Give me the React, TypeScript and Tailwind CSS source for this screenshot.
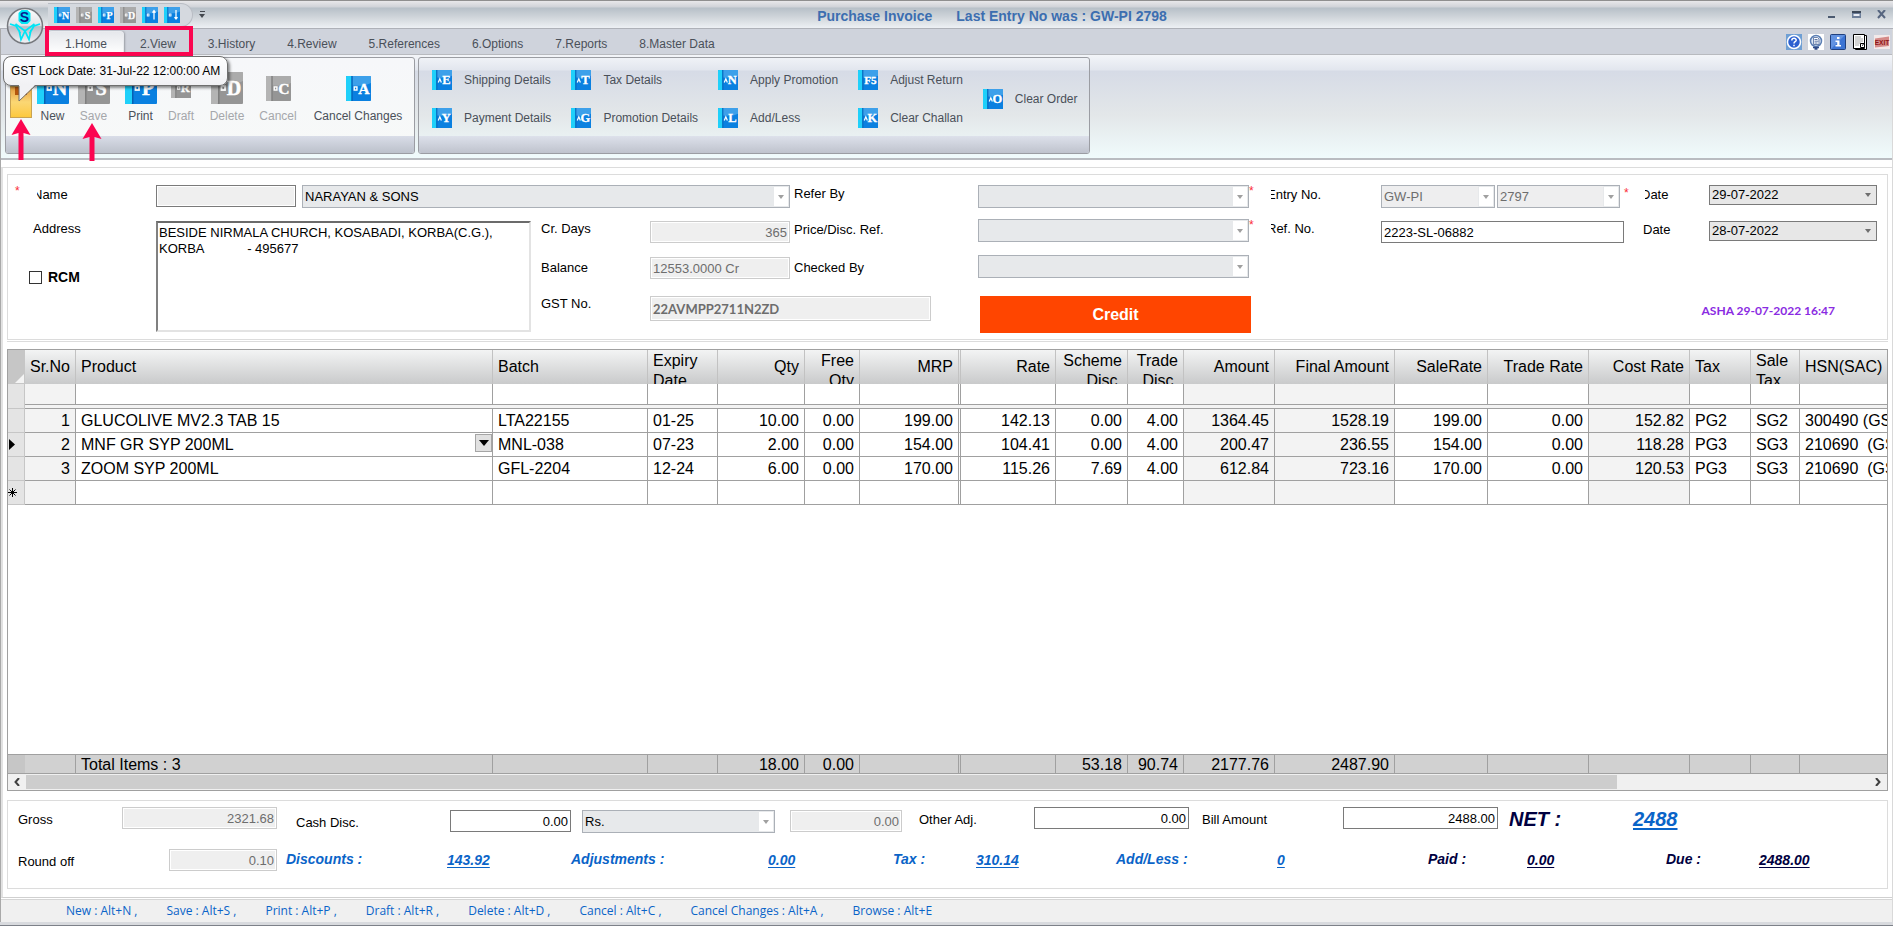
import type { ReactNode } from "react";
import clsx from "clsx";

interface KeyIconProps {
  glyph: string;
  mark?: "square" | "caret" | "none";
  size?: "sm" | "md" | "lg" | "xl";
  muted?: boolean;
}

// Book-shaped shortcut icon, the letter is the key that triggers the command
function KeyIcon({ glyph, mark = "square", size = "md", muted = false }: KeyIconProps) {
  return (
    <svg
      viewBox="0 0 32 32"
      aria-hidden="true"
      className={clsx(
        "shrink-0",
        size === "sm" && "size-4",
        size === "md" && "size-5",
        size === "lg" && "size-[25px]",
        size === "xl" && "size-8"
      )}
    >
      <rect width="32" height="32" rx="1" fill={muted ? "#959595" : "#0a80e0"} />
      <path d="M8 0h24v9c-8 4-16 4-24 3z" fill={muted ? "#b0b0b0" : "#4aa8ec"} opacity="0.8" />
      <rect width="7" height="32" rx="1" fill={muted ? "#b4b4b4" : "#1fd0fa"} />
      <rect x="7" width="1.5" height="32" fill={muted ? "#7e7e7e" : "#0560b4"} />
      {mark === "square" && <rect x="10.500" y="14" width="3.500" height="4" fill="none" stroke="#fff" strokeWidth="1.800" />}
      {mark === "caret" && <path d="M10 20l2.500-6 2.500 6" fill="none" stroke="#fff" strokeWidth="2" />}
      {glyph === "up" && <path d="M24 25V8M21 11l3-4 3 4" fill="none" stroke="#fff" strokeWidth="2.5" />}
      {glyph === "down" && <path d="M24 6v17M21 20l3 4 3-4" fill="none" stroke="#fff" strokeWidth="2.5" />}
      {glyph !== "up" && glyph !== "down" && (
        <text
          x={mark === "none" ? 20 : 23}
          y="23"
          textAnchor="middle"
          fill="#fff"
          stroke="#fff"
          strokeWidth="0.5"
          fontFamily="Liberation Serif, serif"
          fontWeight="bold"
          fontSize={mark === "none" ? 18 : 20}
        >
          {glyph}
        </text>
      )}
    </svg>
  );
}

function DownArrow({ className }: { className?: string }) {
  return (
    <svg viewBox="0 0 6 4" className={clsx("w-1.5 h-1", className)} aria-hidden="true">
      <path d="M0 0h6L3 4z" fill="currentColor" />
    </svg>
  );
}

interface ComboProps {
  id: string;
  value?: string;
  label?: string;
  variant?: "combo" | "dim" | "date";
  className?: string;
}

function Combo({ id, value = "", label, variant = "combo", className }: ComboProps) {
  return (
    <div
      className={clsx(
        "flex items-stretch border",
        variant === "combo" && "h-[23px] bg-[#e7e9eb] border-[#abb0b7] text-black",
        variant === "dim" && "h-[23px] bg-[#eeeeef] border-[#abb0b7] text-[#6d6d6d]",
        variant === "date" && "h-5 bg-[#e7e7e7] border-[#7a7a7a] text-black",
        className
      )}
    >
      <select id={id} aria-label={label} defaultValue={value} className="appearance-none flex-1 min-w-0 pl-0.5 bg-transparent outline-none">
        <option value={value}>{value}</option>
      </select>
      <span
        className={clsx(
          "w-4 flex items-center justify-center",
          variant === "date" ? "text-[#6f6f6f]" : "bg-white border border-[#e7e9eb] text-[#a0a0a0]"
        )}
      >
        <DownArrow />
      </span>
    </div>
  );
}

interface FieldProps {
  id: string;
  value?: string;
  label?: string;
  tone?: "edit" | "locked" | "framed";
  className?: string;
}

function Field({ id, value = "", label, tone = "edit", className }: FieldProps) {
  return (
    <input
      id={id}
      type="text"
      aria-label={label}
      defaultValue={value}
      readOnly={tone !== "edit"}
      className={clsx(
        "border px-0.5 outline-none",
        tone === "edit" && "bg-white border-[#7a7a7a] text-black",
        tone === "locked" && "bg-[#efefef] border-[#cccccc] text-[#6d6d6d] ring-1 ring-inset ring-white",
        tone === "framed" && "bg-[#efefef] border-[#7a7a7a] text-[#6d6d6d] ring-1 ring-inset ring-white",
        className
      )}
    />
  );
}

function Star() {
  return <span className="w-2 shrink-0 text-red-500 text-xs leading-3">*</span>;
}

// Label whose first letter runs under the required marker
function CutLabel({ htmlFor, children }: { htmlFor: string; children: ReactNode }) {
  return (
    <label htmlFor={htmlFor} className="block overflow-hidden">
      <span className="block -ml-1">{children}</span>
    </label>
  );
}

const quickAccess = [
  { glyph: "N", name: "New" },
  { glyph: "S", name: "Save", muted: true },
  { glyph: "P", name: "Print" },
  { glyph: "D", name: "Delete", muted: true },
  { glyph: "up", name: "Previous" },
  { glyph: "down", name: "Next" },
];

const tabs = ["1.Home", "2.View", "3.History", "4.Review", "5.References", "6.Options", "7.Reports", "8.Master Data"];

const commands: { glyph: string; name: string; size: "md" | "lg" | "xl"; muted?: boolean; width: string }[] = [
  { glyph: "N", name: "New", size: "xl", width: "w-[41px]" },
  { glyph: "S", name: "Save", size: "xl", muted: true, width: "w-[41px]" },
  { glyph: "P", name: "Print", size: "xl", width: "w-[53px]" },
  { glyph: "R", name: "Draft", size: "md", muted: true, width: "w-7" },
  { glyph: "D", name: "Delete", size: "xl", muted: true, width: "w-16" },
  { glyph: "C", name: "Cancel", size: "lg", muted: true, width: "w-[38px]" },
  { glyph: "A", name: "Cancel Changes", size: "lg", width: "w-[98px] ml-3" },
];

const shortcuts: { glyph: string; name: string; mark?: "none" }[][] = [
  [{ glyph: "E", name: "Shipping Details" }, { glyph: "Y", name: "Payment Details" }],
  [{ glyph: "T", name: "Tax Details" }, { glyph: "G", name: "Promotion Details" }],
  [{ glyph: "N", name: "Apply Promotion" }, { glyph: "L", name: "Add/Less" }],
  [{ glyph: "F5", name: "Adjust Return", mark: "none" }, { glyph: "K", name: "Clear Challan" }],
  [{ glyph: "O", name: "Clear Order" }],
];

interface Column {
  name: string;
  width: string;
  right?: boolean;
  twoLine?: boolean;
  shaded?: boolean;
  split?: boolean;
}

const columns: Column[] = [
  { name: "Sr.No", width: "w-[51px]", right: true, shaded: true },
  { name: "Product", width: "w-[417px]" },
  { name: "Batch", width: "w-[155px]" },
  { name: "Expiry Date", width: "w-[70px]", twoLine: true },
  { name: "Qty", width: "w-[87px]", right: true },
  { name: "Free Qty", width: "w-[55px]", right: true, twoLine: true },
  { name: "MRP", width: "w-[101px]", right: true, split: true },
  { name: "Rate", width: "w-[95px]", right: true },
  { name: "Scheme Disc.", width: "w-[72px]", right: true, twoLine: true },
  { name: "Trade Disc.", width: "w-[56px]", right: true, twoLine: true },
  { name: "Amount", width: "w-[91px]", right: true, shaded: true },
  { name: "Final Amount", width: "w-[120px]", right: true, shaded: true },
  { name: "SaleRate", width: "w-[93px]", right: true },
  { name: "Trade Rate", width: "w-[101px]", right: true },
  { name: "Cost Rate", width: "w-[101px]", right: true, shaded: true },
  { name: "Tax", width: "w-[61px]" },
  { name: "Sale Tax", width: "w-[49px]", twoLine: true },
  { name: "HSN(SAC)", width: "" },
];

const rows = [
  ["1", "GLUCOLIVE MV2.3 TAB 15", "LTA22155", "01-25", "10.00", "0.00", "199.00", "142.13", "0.00", "4.00", "1364.45", "1528.19", "199.00", "0.00", "152.82", "PG2", "SG2", "300490 (GS"],
  ["2", "MNF GR SYP 200ML", "MNL-038", "07-23", "2.00", "0.00", "154.00", "104.41", "0.00", "4.00", "200.47", "236.55", "154.00", "0.00", "118.28", "PG3", "SG3", "210690  (GS"],
  ["3", "ZOOM SYP 200ML", "GFL-2204", "12-24", "6.00", "0.00", "170.00", "115.26", "7.69", "4.00", "612.84", "723.16", "170.00", "0.00", "120.53", "PG3", "SG3", "210690  (GS"],
];

const totals = ["", "Total Items : 3", "", "", "18.00", "0.00", "", "", "53.18", "90.74", "2177.76", "2487.90", "", "", "", "", "", ""];

const hints = [
  "New : Alt+N ,",
  "Save : Alt+S ,",
  "Print : Alt+P ,",
  "Draft : Alt+R ,",
  "Delete : Alt+D ,",
  "Cancel : Alt+C ,",
  "Cancel Changes : Alt+A ,",
  "Browse : Alt+E",
];

function GridColumns() {
  return (
    <colgroup>
      <col className="w-[17px]" />
      {columns.map((c) => (
        <col key={c.name} className={c.width} />
      ))}
    </colgroup>
  );
}

function AppButton() {
  return (
    <button type="button" aria-label="Application menu" className="absolute left-1.5 top-[7px] size-[38px] z-10">
      <svg viewBox="0 0 38 38" className="size-full">
        <defs>
          <linearGradient id="orb" x1="0" y1="0" x2="0" y2="1">
            <stop offset="0" stopColor="#fdfdfd" />
            <stop offset="0.48" stopColor="#e2e4e8" />
            <stop offset="0.52" stopColor="#b9bdc6" />
            <stop offset="1" stopColor="#f4f5f8" />
          </linearGradient>
        </defs>
        <circle cx="19" cy="19" r="17.5" fill="url(#orb)" stroke="#77797e" strokeWidth="1.5" />
        <path
          d="M4 17l6 2 4.500 7.500M34 17l-6 2-4.500 7.500M9.500 17l9.500 7 9.500-7M13 23l2 9.500 4-8.500 4 8.500 2-9.500"
          fill="none"
          stroke="#00e5f5"
          strokeWidth="1.7"
        />
        <path d="M15.500 3h6l3 3v8l-3 3h-6l-3-3V6z" fill="#00e5f5" />
        <text x="18.500" y="15" textAnchor="middle" fontSize="14" fontWeight="bold" fill="#0a1a90" fontFamily="Liberation Sans, sans-serif">
          S
        </text>
      </svg>
    </button>
  );
}

function TitleBar() {
  return (
    <div className="h-[29px] flex items-center border-t border-t-[#8f8f8f] border-b border-b-[#aeb1b8] bg-[linear-gradient(#e8e8ea_0,#d0d3d8_6px,#b7c0c8_7px,#d2d7dc_17px,#edf0f4_100%)]">
      <div className="h-6 ml-12 pl-[6px] pr-3 flex items-center gap-1.5 rounded-r-full border border-l-0 border-[#b9bdc4] bg-[#d5d9df]">
        {quickAccess.map((q) => (
          <button key={q.name} type="button" aria-label={q.name}>
            <KeyIcon glyph={q.glyph} muted={q.muted} size="sm" />
          </button>
        ))}
      </div>
      <button type="button" aria-label="Customize" className="ml-1.5 flex flex-col items-center gap-0.5 text-[#44484f]">
        <span className="w-[5px] h-px bg-[#44484f]" />
        <DownArrow />
      </button>
      <h1 className="flex-1 flex justify-center gap-6 pt-0.5 pr-12 text-sm font-bold text-[#3c6eb0]">
        <span>Purchase Invoice</span>
        <span>Last Entry No was : GW-PI 2798</span>
      </h1>
      <div className="flex items-center gap-4 pr-[7px]">
        <button type="button" aria-label="Minimize">
          <svg viewBox="0 0 9 9" className="size-[9px]"><path d="M1 6h7v2H1z" fill="#4b5a70" /></svg>
        </button>
        <button type="button" aria-label="Restore">
          <svg viewBox="0 0 9 9" className="size-[9px]">
            <path d="M0 1h9v7H0z" fill="#6d7f9a" />
            <path d="M0 1h9v2H0z" fill="#3c4859" />
            <path d="M1.500 4h6v2h-6z" fill="#e8ecf4" />
          </svg>
        </button>
        <button type="button" aria-label="Close">
          <svg viewBox="0 0 9 9" className="size-[9px]"><path d="M1 0l7 8M8 0L1 8" stroke="#56657f" strokeWidth="2" /></svg>
        </button>
      </div>
    </div>
  );
}

function TabStrip() {
  return (
    <div className="h-[26px] flex items-end bg-[#cfd3dc] border-b border-[#b8babf] text-xs text-[#4a5059]">
      <nav className="flex ml-[47px]">
        {tabs.map((tab, index) => (
          <button
            key={tab}
            type="button"
            className={clsx(
              "h-[23px] px-4 pt-0.5",
              index === 0 && "rounded-t-sm border-x border-t border-[#e9ebef] bg-linear-to-b from-[#e6e8ec] to-white shadow-[1px_0_2px_rgba(0,0,0,0.25)]"
            )}
          >
            {tab}
          </button>
        ))}
      </nav>
      <div className="ml-auto self-center flex gap-1.5 pt-px pr-0.5">
        <button type="button" aria-label="Help">
          <svg viewBox="0 0 16 16" className="size-4">
            <rect width="16" height="16" fill="#6f9fd4" />
            <circle cx="8" cy="8" r="6.500" fill="#2a5fd0" stroke="#fff" strokeWidth="1.500" />
            <path d="M5.800 6.500C5.800 3.500 10.400 3.700 10.200 6.300 10.100 7.800 8 7.700 8 9.500M8 10.800v1.500" fill="none" stroke="#fff" strokeWidth="1.500" />
          </svg>
        </button>
        <button type="button" aria-label="Notes">
          <svg viewBox="0 0 16 16" className="size-4">
            <rect width="16" height="16" fill="#fff" />
            <circle cx="8" cy="7" r="5.500" fill="#dfe8f5" stroke="#5c7fb4" strokeWidth="1.500" />
            <path d="M5.500 3.500h4l1.500 1.500v5.500H5.500z" fill="#fff" stroke="#4b679c" strokeWidth="0.800" />
            <path d="M6.500 5.500h3M6.500 7.200h4M6.500 9h3" stroke="#4b679c" strokeWidth="0.900" />
            <path d="M5 13.500h6M6.500 15h3" stroke="#2f4a86" strokeWidth="1.300" />
          </svg>
        </button>
        <button type="button" aria-label="Information">
          <svg viewBox="0 0 16 16" className="size-4">
            <rect x="0.500" y="0.500" width="15" height="15" rx="1" fill="#3c74d4" stroke="#20407e" />
            <path d="M1 1h14L1 15z" fill="#7ba6ea" opacity="0.600" />
            <path d="M7 3h2.500v2H7zM5.500 6.500h4V11H11v1.500H5.500V11h1.700V8H5.500z" fill="#fff" />
          </svg>
        </button>
        <button type="button" aria-label="Document">
          <svg viewBox="0 0 16 16" className="size-4">
            <path d="M3.500 1.500h11v14h-11z" fill="#fff" stroke="#000" />
            <path d="M1.500 0.500h11v14h-11z" fill="#fff" stroke="#000" />
            <path d="M3 3h6M3 5h8M3 7h8M3 9h6M3 11h4" stroke="#a9a9a9" />
            <path d="M8.500 9.500h4v4h-4zM10 11.500l1.500-1" fill="#fff" stroke="#000" />
          </svg>
        </button>
        <button type="button" aria-label="Exit">
          <svg viewBox="0 0 16 16" className="size-4">
            <rect y="1" width="16" height="14" fill="#f3e9e9" />
            <path d="M1 4.500l14-2V12L1 13.500z" fill="#d58a88" />
            <text x="8" y="11" textAnchor="middle" fontSize="6.500" fontWeight="bold" fill="#8e1414" fontFamily="Liberation Sans, sans-serif">
              EXIT
            </text>
          </svg>
        </button>
      </div>
    </div>
  );
}

function Ribbon() {
  return (
    <div className="h-[105px] pl-1 pt-0.5 pb-1 flex items-stretch gap-[3px] text-xs text-[#4a5059] border-b-2 border-b-[#b9bcc1] bg-[linear-gradient(#f3f5f9_0,#e2e6ee_15px,#d6dbe6_16px,#e3e7e9_60px,#f0fbfc_100%)]">
      {/* Commands */}
      <section className="w-[410px] flex flex-col border border-[#9b9da3] rounded-[3px] overflow-hidden bg-linear-to-b from-[#f6f7fa] to-[#f7f9f8]">
        <div className="flex-1 flex items-end pb-3">
          <button
            type="button"
            aria-label="GST lock"
            className="w-[22px] h-8 ml-1 mb-1.5 border border-[#c9a353] bg-linear-to-b from-[#e39a3c] via-[#fbd774] to-[#fdc93c] flex justify-center"
          >
            <span className="w-3 h-2 bg-[#b4560c]" />
          </button>
          {commands.map((c) => (
            <button key={c.name} type="button" className={clsx("flex flex-col items-center whitespace-nowrap", c.width, c.muted && "text-[#a5a7ab]")}>
              <span className="h-8 mb-1 flex items-center justify-center">
                <KeyIcon glyph={c.glyph} size={c.size} muted={c.muted} />
              </span>
              <span className="h-4">{c.name}</span>
            </button>
          ))}
        </div>
        <div className="h-[17px] bg-linear-to-b from-[#d9dde8] to-[#bcc1cb]" />
      </section>
      {/* Shortcuts */}
      <section className="flex flex-col border border-[#9b9da3] rounded-[3px] overflow-hidden">
        <div className="flex-1 flex items-center gap-5 pt-[3px] pl-[13px] pr-[11px]">
          {shortcuts.map((group) => (
            <div key={group[0].name} className="flex flex-col gap-[17px]">
              {group.map((s) => (
                <button key={s.name} type="button" className="flex items-center gap-3 whitespace-nowrap">
                  <KeyIcon glyph={s.glyph} mark={s.mark ?? "caret"} />
                  <span className="leading-5 pt-px">{s.name}</span>
                </button>
              ))}
            </div>
          ))}
        </div>
        <div className="h-[17px] bg-linear-to-b from-[#dde1eb] to-[#bfc3cd]" />
      </section>
    </div>
  );
}

// Balloon, frame and arrows that sit over the ribbon
function Callouts() {
  return (
    <>
      <div className="absolute left-[45px] top-[26px] w-[148px] h-[30px] border-4 border-[#fb0550] z-20" />
      <div role="tooltip" className="absolute left-[3px] top-14 h-[30px] px-[7px] flex items-center whitespace-nowrap text-xs text-black bg-linear-to-b from-white to-[#f1f1f4] border border-[#6f6f6f] rounded-lg shadow-[2px_2px_3px_rgba(0,0,0,0.45)] z-20">
        GST Lock Date: 31-Jul-22 12:00:00 AM
      </div>
      <svg viewBox="0 0 18 17" className="absolute left-[18px] top-[85px] w-[18px] h-[17px] z-30" aria-hidden="true">
        <path d="M1 0v16L17 0z" fill="#f1f1f4" />
        <path d="M1 1v15L17 1" fill="none" stroke="#6f6f6f" />
      </svg>
      <svg viewBox="0 0 20 42" className="absolute left-[11px] top-[119px] w-5 h-[42px] z-20" aria-hidden="true">
        <path d="M10 0l9.500 16L12.500 14v27h-5V14L.5 16z" fill="#fb0550" />
      </svg>
      <svg viewBox="0 0 20 42" className="absolute left-[82px] top-[123px] w-5 h-[38px] z-20" aria-hidden="true" preserveAspectRatio="xMidYMin slice">
        <path d="M10 0l9.500 16L12.500 14v24h-5V14L.5 16z" fill="#fb0550" />
      </svg>
    </>
  );
}

function InvoiceForm() {
  return (
    <section className="mx-1 mt-1.5 h-[166px] shrink-0 pt-[10px] pr-[10px] flex border border-[#dcdcdc] text-[13px] leading-4">
      {/* Party */}
      <div className="flex-1 min-w-0">
        <div className="flex h-9">
          <div className="w-[148px] shrink-0 flex pl-[7px]">
            <Star />
            <div className="pl-[14px] pt-0.5">
              <CutLabel htmlFor="party-code">Name</CutLabel>
            </div>
          </div>
          <Field id="party-code" tone="framed" className="w-[140px] h-[22px]" />
          <Combo id="party-name" label="Party name" value="NARAYAN & SONS" className="flex-1 ml-1.5" />
        </div>
        <div className="flex">
          <div className="w-[148px] shrink-0 pl-[21px]">
            <label htmlFor="address" className="block pl-1">Address</label>
            <div className="flex items-center gap-1.5 mt-[30px]">
              <input id="rcm" type="checkbox" className="appearance-none size-[13px] border border-[#333333] bg-white" />
              <label htmlFor="rcm" className="text-sm font-bold">RCM</label>
            </div>
          </div>
          <textarea
            id="address"
            defaultValue={"BESIDE NIRMALA CHURCH, KOSABADI, KORBA(C.G.),\nKORBA            - 495677"}
            className="flex-1 min-w-0 h-[111px] pl-px pt-0.5 resize-none outline-none border-2 border-l-[#808080] border-t-[#6b6b6b] border-r-[#e3e3e3] border-b-[#e3e3e3]"
          />
          <div className="w-[259px] shrink-0 pl-[10px]">
            <div className="flex h-9">
              <label htmlFor="cr-days" className="w-[109px]">Cr. Days</label>
              <Field id="cr-days" value="365" tone="locked" className="w-[140px] h-[22px] text-right" />
            </div>
            <div className="flex h-[39px]">
              <label htmlFor="balance" className="w-[109px] pt-[3px]">Balance</label>
              <Field id="balance" value="12553.0000 Cr" tone="locked" className="w-[140px] h-[22px]" />
            </div>
            <div className="flex">
              <label htmlFor="gst-no" className="w-[109px] shrink-0">GST No.</label>
              <Field id="gst-no" value="22AVMPP2711N2ZD" tone="locked" className="w-[281px] shrink-0 h-[25px] font-[Lato,sans-serif] font-bold" />
            </div>
          </div>
        </div>
      </div>

      {/* References */}
      <div className="w-[481px] shrink-0 pl-1">
        <div className="flex h-[34px]">
          <label htmlFor="refer-by" className="w-[184px] pt-px">Refer By</label>
          <Combo id="refer-by" className="w-[271px]" />
          <Star />
        </div>
        <div className="flex h-9">
          <label htmlFor="price-ref" className="w-[184px] pt-[3px]">Price/Disc. Ref.</label>
          <Combo id="price-ref" className="w-[271px]" />
          <Star />
        </div>
        <div className="flex h-[41px]">
          <label htmlFor="checked-by" className="w-[184px] pt-[5px]">Checked By</label>
          <Combo id="checked-by" className="w-[271px]" />
        </div>
        <button type="button" className="ml-[186px] w-[271px] h-[37px] bg-[#ff4500] text-white text-base font-bold">
          Credit
        </button>
      </div>

      {/* Voucher */}
      <div className="w-[606px] shrink-0 flex flex-col">
        <div className="flex h-9">
          <div className="w-[110px] pt-0.5">
            <CutLabel htmlFor="entry-series">Entry No.</CutLabel>
          </div>
          <Combo id="entry-series" value="GW-PI" variant="dim" className="w-[114px]" />
          <Combo id="entry-no" label="Entry number" value="2797" variant="dim" className="w-[123px] ml-0.5" />
          <span className="pl-1"><Star /></span>
          <div className="ml-auto w-16 pt-0.5">
            <CutLabel htmlFor="entry-date">Date</CutLabel>
          </div>
          <Combo id="entry-date" value="29-07-2022" variant="date" className="w-[168px]" />
        </div>
        <div className="flex h-9">
          <div className="w-[110px]">
            <CutLabel htmlFor="ref-no">Ref. No.</CutLabel>
          </div>
          <Field id="ref-no" value="2223-SL-06882" className="w-[243px] h-[22px]" />
          <label htmlFor="ref-date" className="ml-auto w-[66px] pt-px">Date</label>
          <Combo id="ref-date" value="28-07-2022" variant="date" className="w-[168px]" />
        </div>
        <p className="mt-auto mb-5 pr-[42px] text-right text-xs font-[Lato,sans-serif] font-bold text-[#8a2be2]">ASHA 29-07-2022 16:47</p>
      </div>
    </section>
  );
}

function ItemGrid() {
  return (
    <section className="mx-1 mt-px flex-1 flex flex-col border-t border-[#dcdcdc] pt-[7px]">
      <div className="flex-1 flex flex-col border border-[#a0a0a0] text-base leading-5 overflow-hidden">
        <table className="w-full table-fixed border-separate border-spacing-0">
          <GridColumns />
          <thead>
            <tr>
              <th aria-label="Select all" className="p-0 h-[34px] bg-[#c6c6c6] border-r border-b border-[#c6c6c6] align-bottom">
                <svg viewBox="0 0 9 9" className="size-[9px] ml-auto"><path d="M9 0v9H0z" fill="#f4f4f4" /></svg>
              </th>
              {columns.map((c) => (
                <th
                  key={c.name}
                  className={clsx(
                    "p-0 h-[34px] font-normal bg-linear-to-b from-[#f3f4f4] to-[#c9cacb] border-r border-[#c2c2c2] last:border-r-0",
                    c.right ? "text-right" : "text-left",
                    c.split && "border-r-[3px] [border-right-style:double]"
                  )}
                >
                  <div
                    className={clsx(
                      "h-[34px] pr-[5px] overflow-hidden",
                      c.name !== "Sr.No" && "pl-[5px]",
                      c.twoLine ? "pt-px leading-5" : "leading-[34px] whitespace-nowrap"
                    )}
                  >
                    {c.twoLine ? (
                      <>
                        {c.name.split(" ")[0]}
                        <br />
                        {c.name.split(" ")[1]}
                      </>
                    ) : (
                      c.name
                    )}
                  </div>
                </th>
              ))}
            </tr>
          </thead>
          <tbody>
            {/* Filter row */}
            <tr>
              <td className="h-[21px] bg-[#e4e4e4] border-r border-[#c6c6c6]" />
              {columns.map((c) => (
                <td
                  key={c.name}
                  className={clsx("h-[21px] border-r border-b border-[#a0a0a0] last:border-r-0", c.shaded && "bg-[#f3f3f3]", c.split && "border-r-[3px] [border-right-style:double]")}
                />
              ))}
            </tr>
            <tr>
              <td className="h-1 p-0 bg-[#e4e4e4] border-r border-b border-[#c6c6c6]" />
              <td colSpan={columns.length} className="h-1 p-0 bg-[#f3f3f3] border-b border-[#a0a0a0]" />
            </tr>
            {rows.map((row, rowIndex) => (
              <tr key={row[0]}>
                <td className="h-6 p-0 bg-[#e4e4e4] border-r border-b border-[#c6c6c6]">
                  {rowIndex === 1 && (
                    <svg viewBox="0 0 6 11" className="w-1.5 h-[11px] ml-px"><path d="M0 0l6 5.500L0 11z" fill="#000" /></svg>
                  )}
                </td>
                {row.map((cell, index) => (
                  <td
                    key={columns[index].name}
                    className={clsx(
                      "h-6 p-0 border-r border-b border-[#a0a0a0] last:border-r-0 whitespace-pre overflow-hidden",
                      columns[index].shaded && "bg-[#f3f3f3]",
                      columns[index].right ? "text-right pr-[5px]" : "pl-[5px]",
                      columns[index].split && "border-r-[3px] [border-right-style:double]"
                    )}
                  >
                    {rowIndex === 1 && index === 1 ? (
                      <div className="flex items-start justify-between">
                        <span className="pt-px">{cell}</span>
                        <button type="button" aria-label="Choose product" className="w-[17px] h-[18px] flex items-center justify-center bg-[#e1e1e1] border border-[#a5a5a5]">
                          <svg viewBox="0 0 10 6" className="w-2.5 h-1.5"><path d="M0 0h10L5 6z" fill="#000" /></svg>
                        </button>
                      </div>
                    ) : (
                      cell
                    )}
                  </td>
                ))}
              </tr>
            ))}
            {/* New row */}
            <tr>
              <td className="h-6 p-0 bg-[#e4e4e4] border-r border-b border-[#c6c6c6]">
                <svg viewBox="0 0 9 9" className="size-[9px]">
                  <path d="M4.500 0v9M0 4.500h9M1.500 1.500l6 6M7.500 1.500l-6 6" stroke="#000" />
                </svg>
              </td>
              {columns.map((c) => (
                <td
                  key={c.name}
                  className={clsx("h-6 border-r border-b border-[#a0a0a0] last:border-r-0", c.shaded && "bg-[#f3f3f3]", c.split && "border-r-[3px] [border-right-style:double]")}
                />
              ))}
            </tr>
          </tbody>
        </table>

        <table className="w-full mt-auto table-fixed border-separate border-spacing-0 bg-[#d1d1d1] border-y border-[#a0a0a0]">
          <GridColumns />
          <tbody>
            <tr>
              <td className="bg-[#c6c6c6]" />
              {totals.map((cell, index) => (
                <td
                  key={columns[index].name}
                  className={clsx(
                    "h-[18px] leading-[17px] p-0 pt-px border-r border-[#a0a0a0] last:border-r-0",
                    columns[index].right ? "text-right pr-[5px]" : "pl-[5px]",
                    columns[index].split && "border-r-[3px] [border-right-style:double]"
                  )}
                >
                  {cell}
                </td>
              ))}
            </tr>
          </tbody>
        </table>
        <div className="h-4 shrink-0 flex bg-[#f0f0f0]">
          <button type="button" aria-label="Scroll left" className="w-[18px] flex items-center justify-center">
            <svg viewBox="0 0 6 8" className="w-1.5 h-2"><path d="M5 0L1.500 4 5 8" fill="none" stroke="#404040" strokeWidth="2" /></svg>
          </button>
          <div className="flex-1 my-px">
            <div className="w-[86.3%] h-full bg-[#cdcdcd]" />
          </div>
          <button type="button" aria-label="Scroll right" className="w-[18px] flex items-center justify-center">
            <svg viewBox="0 0 6 8" className="w-1.5 h-2"><path d="M1 0l3.500 4L1 8" fill="none" stroke="#404040" strokeWidth="2" /></svg>
          </button>
        </div>
      </div>
    </section>
  );
}

interface SummaryProps {
  name: string;
  value: string;
  dark?: boolean;
  className?: string;
  nameWidth: string;
}

function Summary({ name, value, dark, className, nameWidth }: SummaryProps) {
  return (
    <div className={clsx("flex text-sm leading-5 font-bold italic", dark ? "text-[#000040]" : "text-[#0a64c8]", className)}>
      <span className={nameWidth}>{name}</span>
      <a href="#" className="pt-px underline underline-offset-2">{value}</a>
    </div>
  );
}

function Footer() {
  return (
    <section className="mx-1 mt-[9px] h-[89px] shrink-0 pt-1.5 px-[10px] border border-[#dcdcdc] text-[13px] leading-4">
      <div className="flex h-[42px]">
        <label htmlFor="gross" className="w-[104px] pt-[5px]">Gross</label>
        <Field id="gross" value="2321.68" tone="locked" className="w-[155px] h-[22px] text-right" />
        <div className="flex pt-[3px]">
          <label htmlFor="cash-disc" className="ml-[19px] w-[154px] pt-[5px]">Cash Disc.</label>
          <Field id="cash-disc" value="0.00" className="w-[121px] h-[22px] text-right" />
          <Combo id="disc-unit" label="Discount unit" value="Rs." className="w-[193px] ml-[11px]" />
          <Field id="disc-amount" label="Discount amount" value="0.00" tone="locked" className="w-[112px] h-[22px] ml-[15px] text-right" />
        </div>
        <label htmlFor="other-adj" className="ml-[17px] w-[115px] pt-[5px]">Other Adj.</label>
        <Field id="other-adj" value="0.00" className="w-[155px] h-[22px] text-right" />
        <label htmlFor="bill-amount" className="ml-[13px] w-[141px] pt-[5px]">Bill Amount</label>
        <Field id="bill-amount" value="2488.00" className="w-[155px] h-[22px] text-right" />
        <div className="flex ml-[11px] text-xl leading-6 font-bold italic">
          <span className="w-[124px] text-[#000040]">NET :</span>
          <a href="#" className="text-[#0a64c8] underline underline-offset-2">2488</a>
        </div>
      </div>
      <div className="flex items-start">
        <label htmlFor="round-off" className="w-[151px] pt-[5px]">Round off</label>
        <Field id="round-off" value="0.10" tone="locked" className="w-[108px] h-[22px] text-right" />
        <Summary name="Discounts :" value="143.92" nameWidth="w-[161px]" className="ml-[9px] w-[285px]" />
        <Summary name="Adjustments :" value="0.00" nameWidth="w-[197px]" className="w-[322px]" />
        <Summary name="Tax :" value="310.14" nameWidth="w-[83px]" className="w-[223px]" />
        <Summary name="Add/Less :" value="0" nameWidth="w-[161px]" className="w-[312px]" />
        <Summary name="Paid :" value="0.00" dark nameWidth="w-[99px]" className="w-[238px]" />
        <Summary name="Due :" value="2488.00" dark nameWidth="w-[93px]" />
      </div>
    </section>
  );
}

export default function App() {
  return (
    <div className="relative min-h-screen flex flex-col bg-white text-black font-['Liberation_Sans',Arial,sans-serif]">
      <TitleBar />
      <AppButton />
      <main className="flex-1 flex flex-col border-l border-l-[#a9a9a9] border-r border-r-[#d9d9d9]">
        <TabStrip />
        <Ribbon />
        <div className="flex-1 flex flex-col mt-[7px] border-l-2 border-l-[#e2e2e2] border-t border-t-[#dcdcdc] border-b border-b-[#d0d0d0]">
          <InvoiceForm />
          <ItemGrid />
          <Footer />
          <div className="h-2 shrink-0" />
        </div>
        <footer className="h-[23px] mt-px pl-[65px] flex items-center gap-[29px] bg-[#f0f0f0] border-t border-[#d5d5d5] font-['Open_Sans',sans-serif] text-xs text-[#0a64c8]">
          {hints.map((hint) => (
            <span key={hint}>{hint}</span>
          ))}
        </footer>
      </main>
      <div className="h-1 bg-[#d8dade] border-b border-[#7d8189]" />
      <Callouts />
    </div>
  );
}
